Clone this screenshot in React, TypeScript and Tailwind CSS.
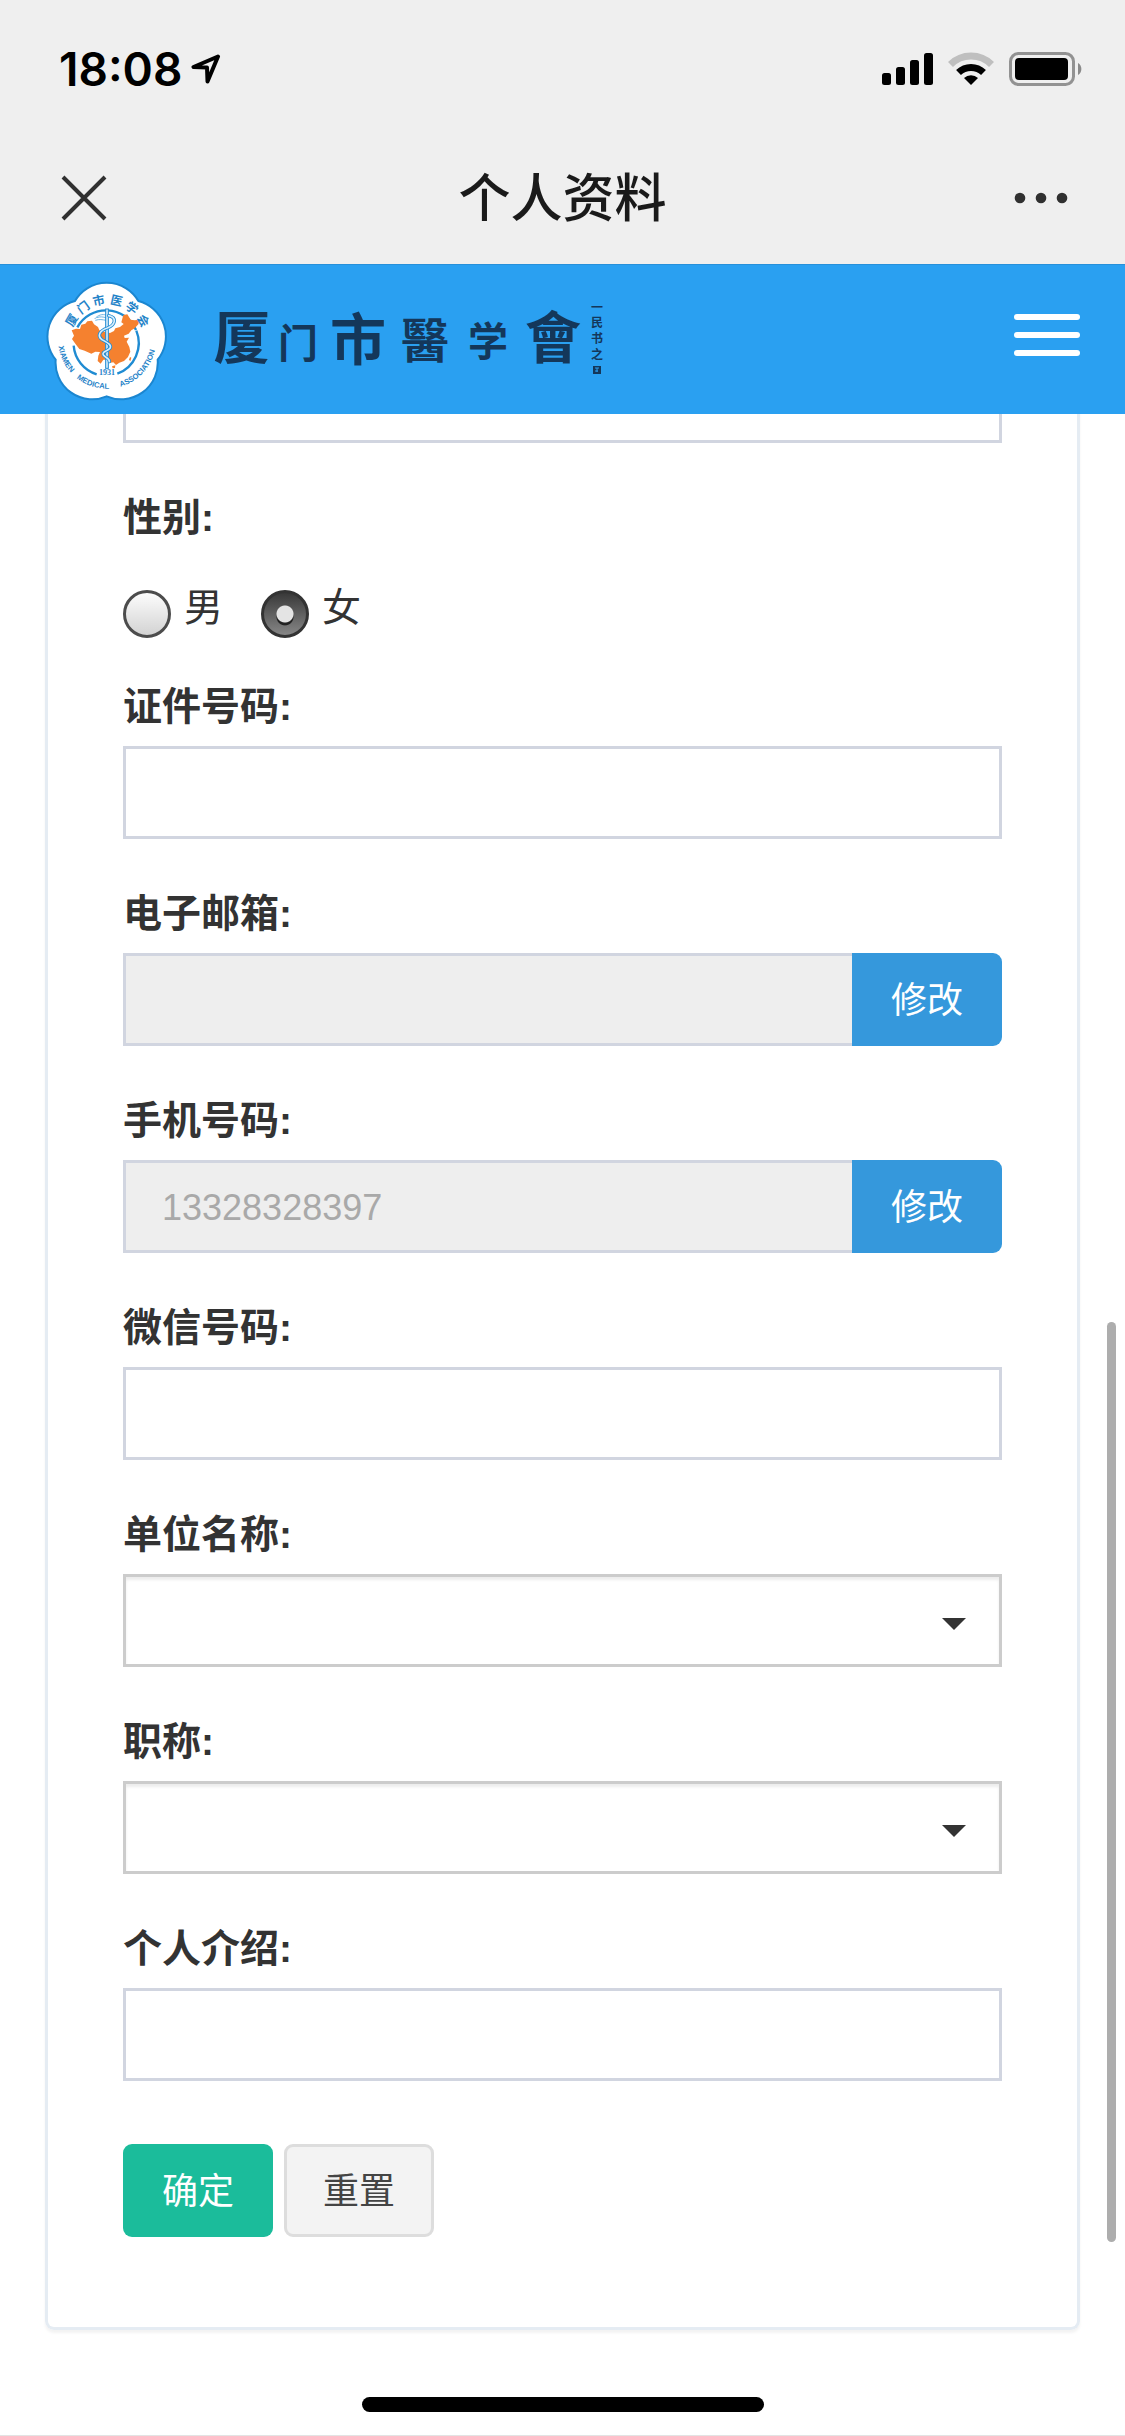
import { useState } from "react";
import type { ReactNode } from "react";

const CONTROL = "block w-full h-[93px] border-[3px] px-[36px] pt-[2px] text-[36px] outline-none";
const BUTTON = "h-[93px] w-[150px] shrink-0 pt-[3px] text-[36px] cursor-pointer";

function LocationIcon() {
  return (
    <svg width="30" height="30" viewBox="0 0 30 30" fill="none" stroke="#000" strokeWidth="4" strokeLinejoin="round">
      <path d="M27 2.5 L2.5 13 L16 13.5 L16.5 27.5 Z" />
    </svg>
  );
}

function SignalIcon() {
  return (
    <svg width="51" height="34" viewBox="0 0 51 34">
      <rect x="0" y="21" width="9" height="12" rx="2.5" />
      <rect x="14" y="15" width="9" height="18" rx="2.5" />
      <rect x="28" y="8" width="9" height="25" rx="2.5" />
      <rect x="42" y="1" width="9" height="32" rx="2.5" />
    </svg>
  );
}

function WifiIcon() {
  return (
    <svg width="46" height="34" viewBox="0 0 46 34" fill="none" strokeWidth="7">
      <path d="M2.5 12.5 A29 29 0 0 1 43.5 12.5" stroke="#bfbfbf" />
      <path d="M10.5 20.5 A18 18 0 0 1 35.5 20.5" stroke="#000" />
      <path d="M23 33 L16 26 A10.5 10.5 0 0 1 30 26 Z" fill="#000" />
    </svg>
  );
}

function BatteryIcon() {
  return (
    <svg width="74" height="34" viewBox="0 0 74 34">
      <rect x="1.5" y="1.5" width="63" height="31" rx="8" fill="none" stroke="#929292" strokeWidth="3" />
      <rect x="6" y="6" width="53" height="22" rx="4" />
      <path d="M69 11 A7 7 0 0 1 69 23 Z" fill="#8a8a8a" />
    </svg>
  );
}

const RING = [
  { char: "厦", angle: -60 },
  { char: "门", angle: -36 },
  { char: "市", angle: -12 },
  { char: "医", angle: 13 },
  { char: "学", angle: 37 },
  { char: "会", angle: 61 },
];

const MOTTO = [
  { word: "XIAMEN", offset: "14%" },
  { word: "MEDICAL", offset: "40%" },
  { word: "ASSOCIATION", offset: "76%" },
];

function Emblem() {
  return (
    <svg className="shrink-0" width="123" height="120" viewBox="45 64 369 360">
      <path
        d="M135 124 A110 110 0 0 1 325 124 A110 110 0 0 1 383 300 A110 110 0 0 1 230 410 A110 110 0 0 1 77 300 A110 110 0 0 1 135 124 Z"
        fill="#fff"
        stroke="#1b86d0"
        strokeWidth="6"
      />
      <g fill="none" stroke="#1f8bd2" strokeWidth="7">
        <path d="M142 203 A98 98 0 0 1 318 211" />
        <path d="M319 213 A98 98 0 0 1 262 342" />
        <path d="M131 258 A98 98 0 0 0 200 344" />
      </g>
      <path
        d="M125 212 L138 207 L150 208 L154 195 L166 192 L172 185 L186 183 L192 194 L204 202 L208 212 L224 216 L240 220 L252 214 L256 206 L270 202 L281 193 L274 188 L280 166 L292 164 L302 180 L314 182 L328 180 L325 194 L314 206 L304 212 L296 222 L282 228 L284 235 L297 234 L290 246 L298 262 L301 276 L294 292 L282 304 L268 309 L258 316 L250 308 L238 310 L230 300 L220 300 L212 312 L203 304 L205 288 L210 277 L196 276 L184 282 L164 273 L148 268 L136 252 L126 238 L132 228 Z"
        fill="#f5812f"
      />
      <path d="M300 292 L304 294 L301 305 L297 300 Z M246 320 L256 317 L255 325 L248 326 Z" fill="#f5812f" />
      <path d="M194 178 C204 165 218 163 228 166 M196 182 C208 178 218 180 228 182 M200 174 C210 170 220 172 228 174" fill="none" stroke="#6fb5e4" strokeWidth="3" />
      <rect x="227" y="148" width="8" height="178" fill="#d5ebfa" stroke="#1f8bd2" strokeWidth="3" />
      <g fill="none" strokeLinecap="round">
        <path d="M236 168 C262 174 256 196 232 205 C206 214 202 230 216 240 C234 250 246 256 240 266 C234 274 214 276 220 286 C226 294 240 296 238 306" stroke="#1f8bd2" strokeWidth="10" />
        <path d="M236 168 C262 174 256 196 232 205 C206 214 202 230 216 240 C234 250 246 256 240 266 C234 274 214 276 220 286 C226 294 240 296 238 306" stroke="#d9edfb" strokeWidth="5" />
      </g>
      <g fill="#1f83c8" textAnchor="middle">
        {RING.map((item) => (
          <text
            key={item.char}
            x="232"
            y="133"
            fontSize="36"
            fontWeight="700"
            fontFamily="Noto Sans CJK SC, sans-serif"
            transform={`rotate(${item.angle} 232 243)`}
          >
            {item.char}
          </text>
        ))}
        <text x="231" y="347" fontSize="24" fontWeight="700" fontFamily="Liberation Serif, serif">
          1931
        </text>
        <path id="emblem-arc" d="M84 240 A147 147 0 0 0 378 240" fill="none" />
        {MOTTO.map((item) => (
          <text key={item.word} fontSize="23" fontWeight="700" fontFamily="Liberation Sans, sans-serif">
            <textPath href="#emblem-arc" startOffset={item.offset}>
              {item.word}
            </textPath>
          </text>
        ))}
      </g>
    </svg>
  );
}

function Wordmark() {
  return (
    <svg
      className="shrink-0 overflow-visible"
      width="400"
      height="100"
      viewBox="0 0 400 100"
      fill="#14375a"
      fontFamily="Noto Sans CJK TC, sans-serif"
      fontWeight="700"
      textAnchor="middle"
    >
      <text x="34" y="68" fontSize="56">厦</text>
      <text x="90" y="68" fontSize="40">门</text>
      <text x="150" y="70" fontSize="56">市</text>
      <text x="217" y="68" fontSize="48">醫</text>
      <text x="280" y="66" fontSize="40">学</text>
      <text x="345" y="68" fontSize="56">會</text>
      <g fontSize="12">
        <text x="389" y="22">一</text>
        <text x="389" y="37">民</text>
        <text x="389" y="53">书</text>
        <text x="389" y="69">之</text>
      </g>
      <rect x="385" y="76" width="8" height="8" />
      <path d="M387 78 H391 M389 78 V82 M387 81 H390" stroke="#2aa0f1" strokeWidth="1" />
    </svg>
  );
}

function Field({ id, label, children }: { id: string; label: string; children: ReactNode }) {
  return (
    <div className="mt-[45px]">
      <label htmlFor={id} className="block mb-[10px] text-[39px] leading-[59px] font-bold">
        {label}:
      </label>
      {children}
    </div>
  );
}

function TextField({ id, label }: { id: string; label: string }) {
  return (
    <Field id={id} label={label}>
      <input id={id} type="text" className={`${CONTROL} border-[#d1d5e0]`} />
    </Field>
  );
}

function LockedField({ id, label, value }: { id: string; label: string; value: string }) {
  return (
    <Field id={id} label={label}>
      <div className="flex">
        <input
          id={id}
          type="text"
          disabled
          value={value}
          className={`${CONTROL} min-w-0 flex-1 border-r-0 border-[#d1d5e0] bg-[#eeeeee] text-[#a9a9a9]`}
        />
        <button type="button" className={`${BUTTON} rounded-r-[9px] bg-[#3598dc] text-white`}>
          修改
        </button>
      </div>
    </Field>
  );
}

function SelectField({ id, label }: { id: string; label: string }) {
  return (
    <Field id={id} label={label}>
      <div className="relative">
        <select
          id={id}
          className={`${CONTROL} appearance-none border-[#cccccc] bg-white shadow-[inset_0_3px_3px_rgba(0,0,0,0.075)]`}
        >
          <option value=""></option>
        </select>
        <svg className="pointer-events-none absolute right-[36px] top-[44px]" width="24" height="12" viewBox="0 0 24 12">
          <path d="M0 0 H24 L12 12 Z" fill="#333" />
        </svg>
      </div>
    </Field>
  );
}

export default function App() {
  const [gender, setGender] = useState("女");

  return (
    <div className="relative border-b border-[#e3e3e3] bg-white text-[#333333] font-['Liberation_Sans','Noto_Sans_CJK_SC',sans-serif]">
      <div className="bg-[#efefef]">
        <div className="flex h-[138px] items-center justify-between pl-[59px] pr-[42px]">
          <div className="flex items-center gap-[9px] text-black">
            <span className="font-['Inter',sans-serif] text-[46px] font-semibold">18:08</span>
            <LocationIcon />
          </div>
          <div className="flex items-center gap-[15px]">
            <SignalIcon />
            <WifiIcon />
            <BatteryIcon />
          </div>
        </div>
        <div className="flex h-[126px] items-start justify-between px-[56px] pt-[24px]">
          <button type="button" aria-label="关闭" className="flex h-[72px] w-14 items-center justify-center">
            <svg width="46" height="46" viewBox="0 0 46 46" stroke="#303030" strokeWidth="4">
              <path d="M2 2 L44 44 M44 2 L2 44" />
            </svg>
          </button>
          <h1 className="text-[52px] leading-[75px] font-medium text-[#1a1a1a]">个人资料</h1>
          <button type="button" aria-label="更多" className="flex h-[72px] w-14 items-center justify-center">
            <svg width="54" height="12" viewBox="0 0 54 12" fill="#303030">
              <circle cx="6" cy="6" r="5.3" />
              <circle cx="27" cy="6" r="5.3" />
              <circle cx="48" cy="6" r="5.3" />
            </svg>
          </button>
        </div>
      </div>

      <header className="relative z-10 flex h-[150px] items-start justify-between border-t border-[#2790da] bg-[#2aa0f1] px-[45px] pt-4">
        <a href="#" className="flex items-start gap-[40px]">
          <Emblem />
          <span className="pt-[9px]">
            <Wordmark />
          </span>
        </a>
        <button type="button" aria-label="菜单" className="mt-[33px] flex w-[66px] flex-col gap-3">
          <span className="h-[6px] w-full rounded-full bg-white"></span>
          <span className="h-[6px] w-full rounded-full bg-white"></span>
          <span className="h-[6px] w-full rounded-full bg-white"></span>
        </button>
      </header>

      <main className="px-[45px]">
        <form
          className="-mt-16 rounded-b-[9px] border-[3px] border-t-0 border-[#e5ecf3] px-[75px] pb-[90px] shadow-[0_3px_3px_rgba(0,0,0,0.05)]"
          onSubmit={(e) => e.preventDefault()}
        >
          <input type="text" aria-label="姓名" className={`${CONTROL} border-[#d1d5e0]`} />

          <fieldset className="mt-[45px]">
            <legend className="text-[39px] leading-[59px] font-bold">性别:</legend>
            <div className="flex gap-[38px] pt-[43px] pb-[39px]">
              {["男", "女"].map((option) => (
                <label key={option} className="flex h-12 items-start gap-[13px] text-[39px] leading-[35px]">
                  <input
                    type="radio"
                    name="gender"
                    value={option}
                    checked={gender === option}
                    onChange={() => setGender(option)}
                    className="size-12 appearance-none rounded-full border-[3px] border-[#4c4c4c] bg-[linear-gradient(#ffffff,#d0d0d0)] bg-origin-border checked:border-[#333333] checked:bg-[radial-gradient(circle_at_50%_50%,#e4e4e4_8px,transparent_9px),radial-gradient(circle_at_50%_56%,#222222_8px,transparent_9px),linear-gradient(#333333,#8c8c8c)]"
                  />
                  {option}
                </label>
              ))}
            </div>
          </fieldset>

          <div className="-mt-[45px]">
            <TextField id="idcard" label="证件号码" />
          </div>
          <LockedField id="email" label="电子邮箱" value="" />
          <LockedField id="mobile" label="手机号码" value="13328328397" />
          <TextField id="wechat" label="微信号码" />
          <SelectField id="company" label="单位名称" />
          <SelectField id="title" label="职称" />
          <TextField id="intro" label="个人介绍" />

          <div className="mt-[63px] flex gap-[11px]">
            <button type="submit" className={`${BUTTON} rounded-[9px] bg-[#1bbc9b] text-white`}>
              确定
            </button>
            <button type="reset" className={`${BUTTON} rounded-[9px] border-[3px] border-[#dddddd] bg-[#f3f3f3] text-[#444444]`}>
              重置
            </button>
          </div>
        </form>
      </main>

      <div className="absolute right-[9px] top-[1322px] h-[920px] w-[9px] rounded-full bg-[#adadad]"></div>
      <div className="flex justify-center pt-[67px] pb-[23px]">
        <div className="h-[15px] w-[402px] rounded-full bg-black"></div>
      </div>
    </div>
  );
}
